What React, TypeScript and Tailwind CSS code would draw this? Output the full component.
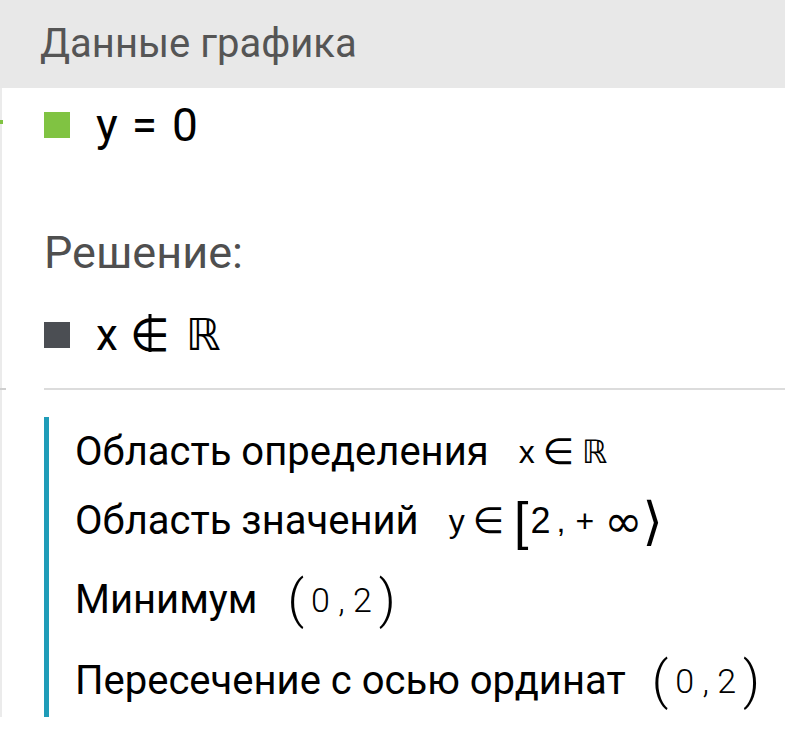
const props = [
  { label: "Область определения" },
  { label: "Область значений" },
  { label: "Минимум" },
  { label: "Пересечение с осью ординат" },
];

function Math({ children }: { children: React.ReactNode }) {
  return (
    <span className="ml-[30px] flex items-center font-['Liberation_Sans','DejaVu_Sans',sans-serif] text-[32px] text-black">
      {children}
    </span>
  );
}

function Point() {
  return (
    <Math>
      <span className="font-['Roboto',sans-serif] text-[52px] font-light leading-none">(</span>
      <span className="mx-[7px] font-['Roboto',sans-serif] text-[34px] font-light">0 , 2</span>
      <span className="font-['Roboto',sans-serif] text-[52px] font-light leading-none">)</span>
    </Math>
  );
}

export default function App() {
  return (
    <div className="relative h-[736px] w-[785px] overflow-hidden bg-white font-['Roboto',sans-serif]">
      <div className="flex h-[88px] items-center bg-[#e8e8e8] pl-[40px]">
        <span className="text-[40px] text-[#555555]">Данные графика</span>
      </div>

      <div className="border-l-[2px] border-[#ebebeb] pl-[42px]">
        <div className="flex h-[74px] items-center">
          <span className="h-[26px] w-[26px] bg-[#80c342]" />
          <span className="ml-[26px] flex items-center text-[46px] text-black">
            y<span className="ml-[14px]">=</span>
            <span className="ml-[15px]">0</span>
          </span>
        </div>

        <div className="mt-[56px] flex h-[70px] items-center">
          <span className="text-[45px] text-[#4f4f4f]">Решение:</span>
        </div>

        <div className="mt-[12px] flex h-[70px] items-center">
          <span className="h-[26px] w-[26px] bg-[#4b4e53]" />
          <span className="ml-[26px] flex items-center text-[44px] text-black">
            x
            <span className="relative ml-[12px] font-['DejaVu_Sans',sans-serif] text-[46px] leading-none">
              ∈
              <span className="absolute left-1/2 top-[2px] h-[38px] w-[3px] -translate-x-1/2 bg-black" />
            </span>
            <span className="ml-[16px] font-['DejaVu_Sans',sans-serif] text-[44px]">ℝ</span>
          </span>
        </div>

        <div className="mt-[18px] h-[2px] bg-[#dcdcdc]" />

        <div className="mt-[27px] border-l-[5px] border-[#1f9cb8] pl-[26px]">
          <div className="flex h-[70px] items-center">
            <span className="text-[40px] text-black">{props[0].label}</span>
            <Math>
              x<span className="ml-[8px] text-[36px]">∈</span>
              <span className="ml-[8px]">ℝ</span>
            </Math>
          </div>
          <div className="flex h-[68px] items-center">
            <span className="text-[40px] text-black">{props[1].label}</span>
            <Math>
              y<span className="ml-[8px] text-[36px]">∈</span>
              <span className="ml-[10px] text-[52px] font-light leading-none">[</span>
              <span className="ml-[2px] text-[36px]">2</span>
              <span className="ml-[6px]">,</span>
              <span className="ml-[10px]">+</span>
              <span className="ml-[10px] font-['DejaVu_Sans',sans-serif] text-[46px] leading-none">∞</span>
              <span className="text-[52px] leading-none">⟩</span>
            </Math>
          </div>
          <div className="flex h-[90px] items-center">
            <span className="text-[40px] text-black">{props[2].label}</span>
            <Point />
          </div>
          <div className="flex h-[72px] items-center">
            <span className="text-[40px] text-black">{props[3].label}</span>
            <span className="-ml-[4px] flex">
              <Point />
            </span>
          </div>
        </div>
      </div>

      <span className="absolute left-0 top-[120px] h-[4px] w-[3px] bg-[#80c342]" />
      <span className="absolute left-0 top-[388px] h-[2px] w-[6px] bg-[#cfcfcf]" />
    </div>
  );
}
